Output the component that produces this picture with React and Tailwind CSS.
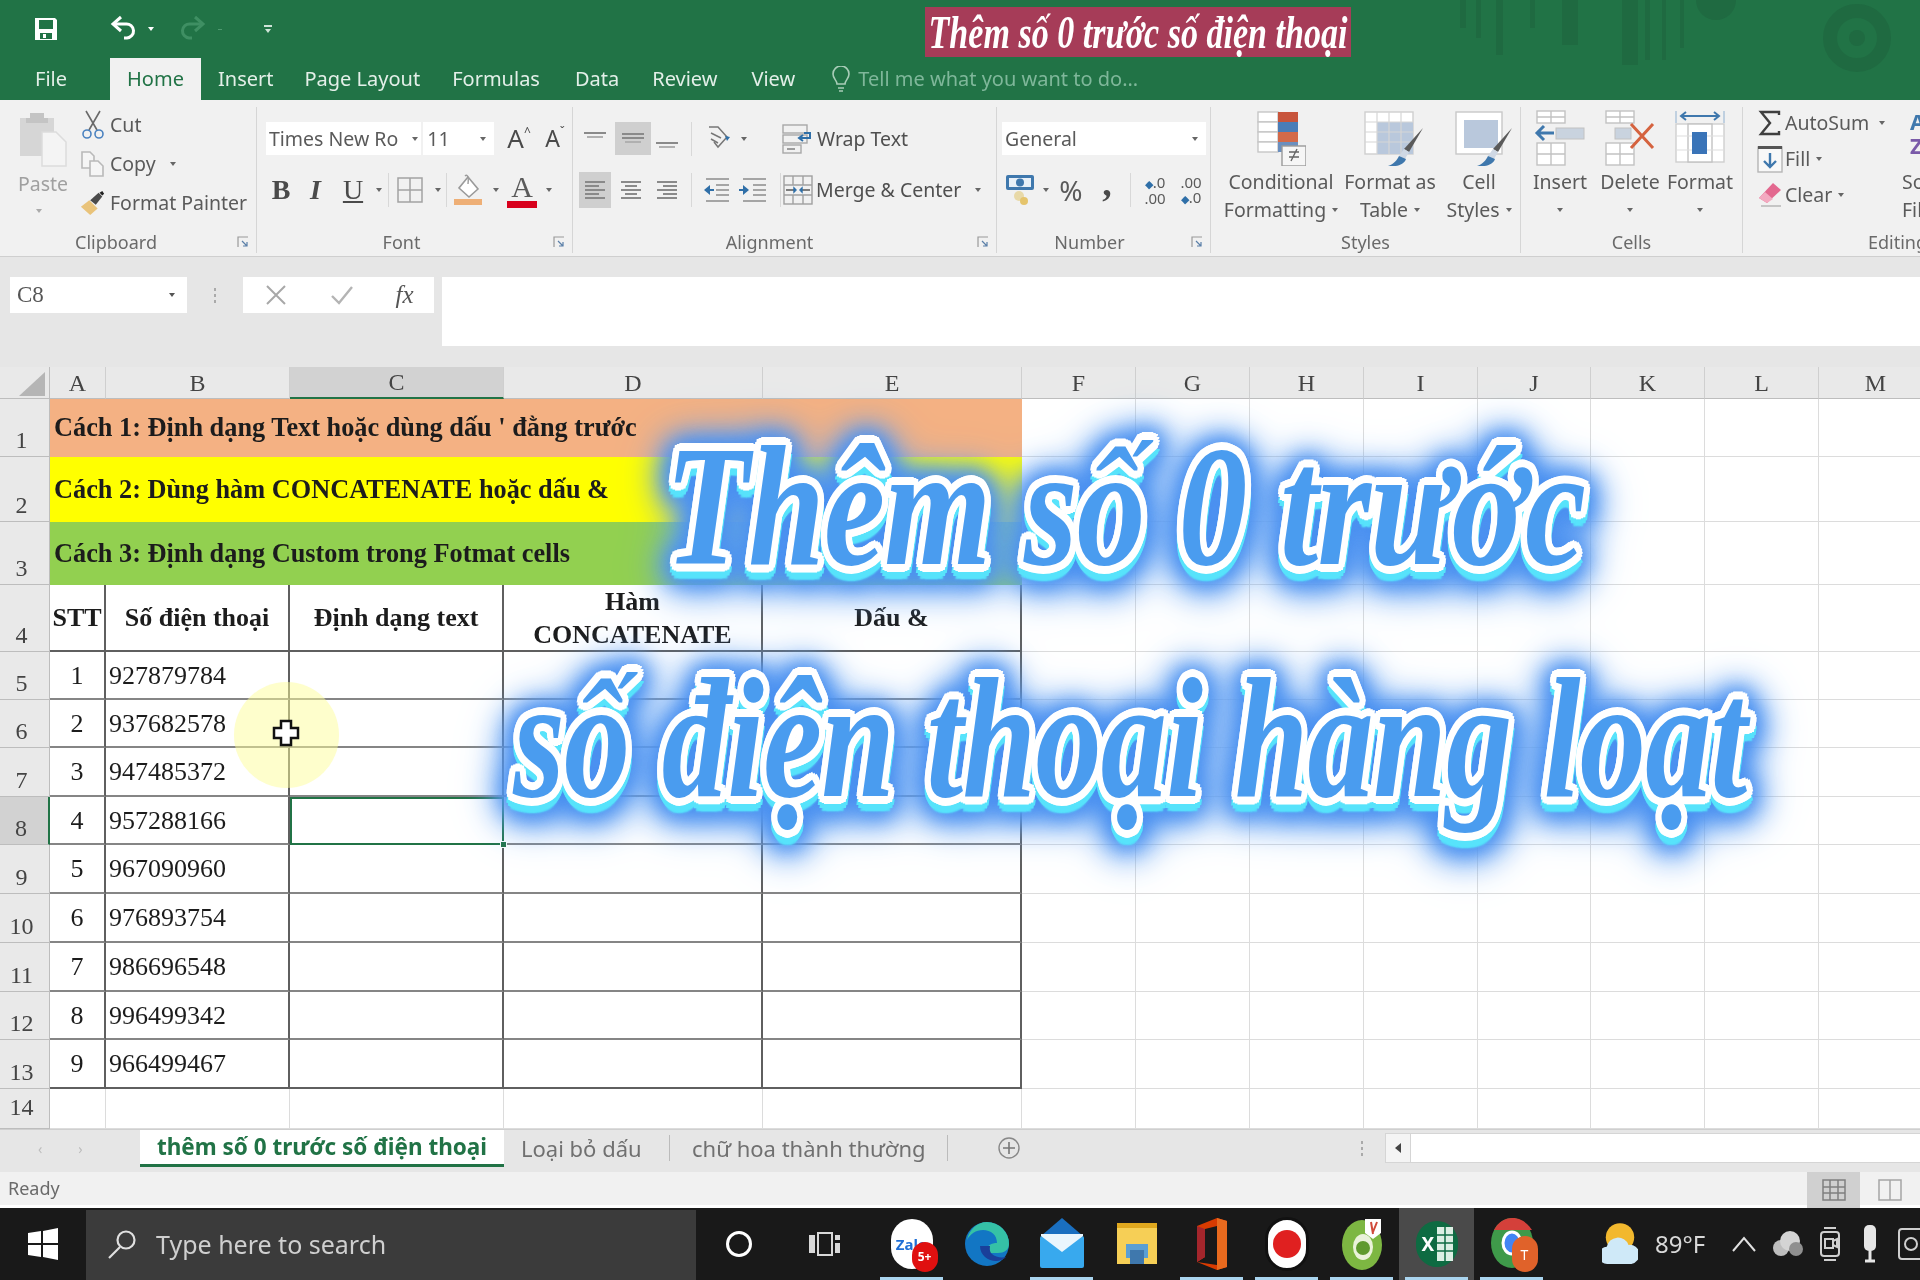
import React from "react";

const SERIF = "[font-family:'Liberation_Serif',serif]";

function Dd({ c = "border-t-[#666]" }) {
  return <span className={`inline-block w-0 h-0 border-x-[3.5px] border-t-[4px] border-x-transparent ${c}`} />;
}
function Sep() {
  return <span className="w-px h-[34px] bg-[#d8d8d8]" />;
}
function Box({ w, h, children, className = "" }) {
  return <span className={`flex items-center justify-center shrink-0 ${w} ${h} ${className}`}>{children}</span>;
}

function Launcher({ className }) {
  return (
    <svg width="12" height="12" viewBox="0 0 12 12" className={className}>
      <path d="M1 11V1h10" fill="none" stroke="#9a9a9a" strokeWidth="1.2" />
      <path d="M5 5l5 5M10 6v4H6" fill="none" stroke="#5a7fa8" strokeWidth="1.2" />
    </svg>
  );
}

function Group({ w, label, labelPad = "", launcher, border = true, children }) {
  return (
    <div className={`flex flex-col shrink-0 h-[146px] ${w} ${border ? "border-r border-[#d6d6d6]" : ""}`}>
      <div className="h-[124px] shrink-0">{children}</div>
      <div className={`relative h-[22px] flex items-center justify-center text-[18px] text-[#6a6a6a] ${labelPad}`}>
        {label}
        {launcher && <Launcher className="absolute right-[7px] top-[5px]" />}
      </div>
    </div>
  );
}

function Lines({ kind, gray = "#8a8a8a" }) {
  const rows = {
    left: [[2, 22], [2, 16], [2, 22], [2, 16], [2, 22]],
    center: [[2, 22], [6, 18], [2, 22], [6, 18], [2, 22]],
    right: [[2, 22], [8, 22], [2, 22], [8, 22], [2, 22]],
  }[kind];
  return (
    <svg width="24" height="22" viewBox="0 0 24 22">
      {rows.map(([a, b], i) => (
        <rect key={i} x={a} y={2 + i * 4} width={b - a} height="2" fill={gray} />
      ))}
    </svg>
  );
}
function VAlign({ pos }) {
  const y = pos === "top" ? 3 : pos === "mid" ? 8 : 13;
  return (
    <svg width="26" height="20" viewBox="0 0 26 20">
      <rect x="2" y={y} width="22" height="2" fill="#8a8a8a" />
      <rect x="5" y={y + 4} width="16" height="2" fill="#b0b0b0" />
      {pos === "mid" && <rect x="2" y={y - 4} width="22" height="2" fill="#8a8a8a" />}
    </svg>
  );
}
function Indent({ flip }) {
  return (
    <svg width="28" height="26" viewBox="0 0 28 26">
      <g fill="#a5a5a5">
        <rect x="4" y="1" width="23" height="2" />
        <rect x="14" y="7" width="13" height="2" />
        <rect x="14" y="12" width="13" height="2" />
        <rect x="14" y="17" width="13" height="2" />
        <rect x="4" y="23" width="23" height="2" />
      </g>
      <path d={flip ? "M10 13L4 8v10z" : "M2 13l6-5v10z"} fill="#2f6fa8" />
      <rect x={flip ? 0 : 7} y="12" width="5" height="2" fill="#2f6fa8" />
    </svg>
  );
}

const Save = () => (
  <svg width="26" height="26" viewBox="0 0 26 26">
    <path d="M2 2h20l2 2v20H2z" fill="#fff" />
    <rect x="6" y="4" width="14" height="9" fill="#217346" />
    <rect x="7" y="17" width="12" height="6" fill="#217346" />
    <rect x="10" y="18" width="3" height="4" fill="#fff" />
  </svg>
);
const Undo = ({ c = "#fff", flip }) => (
  <svg width="28" height="28" viewBox="0 0 28 28" className={flip ? "-scale-x-100" : ""}>
    <path d="M3 9h13a7 7 0 0 1 1 14h-3" fill="none" stroke={c} strokeWidth="3" />
    <path d="M11 2L3 9l8 7" fill="none" stroke={c} strokeWidth="3" />
  </svg>
);
const Scissors = () => (
  <svg width="24" height="30" viewBox="0 0 24 30" fill="none">
    <path d="M5 1l11 19M19 1L8 20" stroke="#6a6a6a" strokeWidth="1.6" />
    <circle cx="6" cy="24" r="4" stroke="#4a82c0" strokeWidth="1.6" />
    <circle cx="18" cy="24" r="4" stroke="#4a82c0" strokeWidth="1.6" />
  </svg>
);
const CopyI = () => (
  <svg width="26" height="28" viewBox="0 0 26 28" fill="none" stroke="#b9b9b9" strokeWidth="1.6">
    <path d="M2 2h8l4 4v12H2z" fill="#f5f5f5" />
    <path d="M10 11h8l5 5v10H10z" fill="#f5f5f5" />
  </svg>
);
const Painter = () => (
  <svg width="28" height="28" viewBox="0 0 28 28">
    <path d="M1 18l9-7 9 9-8 7z" fill="#e9c37a" />
    <path d="M11 11l9-8 4 4-7 9z" fill="#4a4a4a" />
    <path d="M21 3l3-2 2 3-2 2z" fill="#222" />
  </svg>
);
const PasteI = () => (
  <svg width="50" height="58" viewBox="0 0 50 58">
    <rect x="2" y="8" width="34" height="38" fill="#d6d6d6" />
    <path d="M12 8V3h14v5h4v5H8V8z" fill="#c4c4c4" />
    <path d="M24 22h14l10 10v24H24z" fill="#f4f4f4" stroke="#dcdcdc" strokeWidth="1.5" />
  </svg>
);
const Borders = () => (
  <svg width="28" height="28" viewBox="0 0 28 28" fill="none">
    <rect x="2" y="2" width="24" height="24" stroke="#a2a2a2" strokeWidth="1.5" />
    <path d="M14 2v24M2 14h24" stroke="#a2a2a2" strokeWidth="1.5" />
  </svg>
);
const Fill = () => (
  <svg width="30" height="32" viewBox="0 0 30 32">
    <path d="M15 3l10 12-9 8-10-9z" fill="#fff" stroke="#9a9a9a" strokeWidth="1.6" />
    <path d="M12 2c2-2 4 0 3 8" fill="none" stroke="#9a9a9a" strokeWidth="1.4" />
    <rect x="1" y="25" width="28" height="6" fill="#eeaf76" />
  </svg>
);
const FontColor = () => (
  <span className="flex flex-col items-center w-[30px]">
    <span className={`${SERIF} text-[30px] leading-[28px] text-[#5a5a5a]`}>A</span>
    <span className="w-[30px] h-[7px] bg-[#d8001c]" />
  </span>
);
const Orient = () => (
  <svg width="26" height="30" viewBox="0 0 26 30" fill="none">
    <path d="M3 3l9 0 9 10-9 10-4-5" stroke="#777" strokeWidth="1.5" />
    <path d="M5 9l10 5M5 15l7 4" stroke="#777" strokeWidth="1.5" />
    <path d="M19 12l5 1-3 4" fill="#2f6fa8" />
  </svg>
);
const Wrap = () => (
  <svg width="32" height="30" viewBox="0 0 32 30" fill="none">
    <rect x="1" y="1" width="24" height="8" stroke="#a8a8a8" strokeWidth="1.4" />
    <rect x="1" y="11" width="24" height="8" stroke="#a8a8a8" strokeWidth="1.4" />
    <rect x="1" y="21" width="18" height="8" stroke="#a8a8a8" strokeWidth="1.4" />
    <path d="M5 25h8" stroke="#777" strokeWidth="1.4" />
    <path d="M22 9h6v5h-10M21 11l-4 3 4 3" stroke="#2f6fa8" strokeWidth="2" />
  </svg>
);
const Merge = () => (
  <svg width="30" height="30" viewBox="0 0 30 30" fill="none" stroke="#a0a0a0" strokeWidth="1.4">
    <rect x="1" y="1" width="28" height="28" />
    <path d="M1 10h28M1 20h28M10 1v9M20 1v9M10 20v9M20 20v9" />
    <path d="M3 15h8M27 15h-8" stroke="#555" />
    <path d="M11 13v4l2-2zM19 13v4l-2-2z" fill="#2f6fa8" stroke="#2f6fa8" />
  </svg>
);
const Money = () => (
  <svg width="30" height="32" viewBox="0 0 30 32">
    <rect x="1" y="1" width="28" height="15" rx="2" fill="#3f78ad" />
    <rect x="4" y="4" width="22" height="9" fill="#e8f0f8" />
    <circle cx="15" cy="8.5" r="4" fill="#3f78ad" />
    <circle cx="14" cy="22" r="5" fill="#e8d9a8" />
    <circle cx="19" cy="27" r="4" fill="#e5c46c" />
  </svg>
);
const CF = () => (
  <svg width="50" height="56" viewBox="0 0 50 56">
    <g fill="#fff" stroke="#c6c6c6" strokeWidth="1.4">
      <rect x="2" y="2" width="20" height="10" />
      <rect x="2" y="12" width="20" height="10" />
      <rect x="2" y="22" width="20" height="10" />
      <rect x="2" y="32" width="20" height="10" />
    </g>
    <rect x="22" y="2" width="20" height="10" fill="#c8553c" />
    <rect x="22" y="12" width="20" height="10" fill="#4a7db8" />
    <rect x="22" y="22" width="20" height="10" fill="#d36a4a" />
    <rect x="22" y="32" width="20" height="10" fill="#6a8fbf" />
    <rect x="26" y="36" width="24" height="20" fill="#f6f6f6" stroke="#9a9a9a" strokeWidth="1.4" />
    <path d="M33 47h10M33 42h10M41 39l-6 12" stroke="#666" strokeWidth="1.4" />
  </svg>
);
const Brush = () => (
  <>
    <path d="M60 18L46 42l-5-3z" fill="#5a5a5a" />
    <path d="M41 39l5 3-4 7-6-3z" fill="#cfd8e4" />
    <path d="M36 46l7 3c-2 6-10 8-18 7 6-2 9-6 11-10z" fill="#3f78ad" />
  </>
);
const FAT = () => (
  <svg width="60" height="56" viewBox="0 0 60 56">
    <rect x="2" y="2" width="48" height="42" fill="#fff" stroke="#cfcfcf" strokeWidth="1.4" />
    <rect x="14" y="12" width="36" height="32" fill="#b9c8dc" />
    <path d="M2 12h48M2 22h48M2 32h48M14 2v42M26 2v42M38 2v42" stroke="#d6d6d6" strokeWidth="1.2" />
    <Brush />
  </svg>
);
const CS = () => (
  <svg width="60" height="56" viewBox="0 0 60 56">
    <rect x="4" y="2" width="46" height="42" fill="#fff" stroke="#c8c8c8" strokeWidth="1.4" />
    <rect x="12" y="10" width="34" height="28" fill="#b9c8dc" />
    <Brush />
  </svg>
);
const CellsGrid = ({ x, y, w = 28, h = 22 }) => (
  <g fill="#fff" stroke="#c2c2c2" strokeWidth="1.4">
    <rect x={x} y={y} width={w} height={h} />
    <path d={`M${x + w / 2} ${y}v${h}M${x} ${y + h / 2}h${w}`} />
  </g>
);
const InsertI = () => (
  <svg width="52" height="56" viewBox="0 0 52 56">
    <CellsGrid x={3} y={1} h={12} />
    <CellsGrid x={3} y={33} />
    <rect x="22" y="18" width="28" height="11" fill="#c9d3df" stroke="#c2c2c2" />
    <path d="M20 23H4M10 16l-7 7 7 7" fill="none" stroke="#3f78ad" strokeWidth="3" />
  </svg>
);
const DeleteI = () => (
  <svg width="54" height="56" viewBox="0 0 54 56">
    <CellsGrid x={3} y={1} h={12} />
    <CellsGrid x={3} y={33} />
    <rect x="12" y="18" width="16" height="11" fill="#c9d3df" stroke="#c2c2c2" />
    <path d="M28 14l22 24M50 14L28 38" stroke="#d5633f" strokeWidth="3" />
  </svg>
);
const FormatI = () => (
  <svg width="52" height="56" viewBox="0 0 52 56">
    <path d="M2 1v12M50 1v12" stroke="#8fb0d0" strokeWidth="1" />
    <path d="M7 6h38M12 2L7 6l5 4M40 2l5 4-5 4" fill="none" stroke="#3f78ad" strokeWidth="2" />
    <rect x="2" y="14" width="48" height="38" fill="#fff" stroke="#cfcfcf" strokeWidth="1.4" />
    <rect x="14" y="14" width="24" height="38" fill="#fff" stroke="#c2c2c2" strokeWidth="1.4" />
    <path d="M2 26h48M2 40h48" stroke="#ddd" strokeWidth="1.2" />
    <rect x="18" y="22" width="15" height="22" fill="#3a74b8" />
  </svg>
);
const Sigma = () => (
  <svg width="24" height="26" viewBox="0 0 24 26">
    <path d="M21 5V2H3l9 11-9 11h18v-3" fill="none" stroke="#3f3f3f" strokeWidth="2.4" />
  </svg>
);
const FillI = () => (
  <svg width="26" height="28" viewBox="0 0 26 28" fill="none">
    <rect x="1" y="2" width="24" height="25" fill="#f8f8f8" stroke="#b5b5b5" strokeWidth="1.4" />
    <rect x="1" y="1" width="24" height="3" fill="#555" />
    <path d="M13 8v14M7 16l6 6 6-6" stroke="#3f78ad" strokeWidth="2.4" />
  </svg>
);
const Eraser = () => (
  <svg width="26" height="28" viewBox="0 0 26 28">
    <path d="M2 17L16 2l8 7-14 13z" fill="#e3688f" />
    <path d="M2 17l6-6 8 7-6 4z" fill="#f3a9c0" />
    <path d="M4 25h20" stroke="#bbb" strokeWidth="1.6" />
  </svg>
);

const COLS = ["A", "B", "C", "D", "E", "F", "G", "H", "I", "J", "K", "L", "M"];
const HEADS = ["STT", "Số điện thoại", "Định dạng text", null, "Dấu &"];
const DATA = ["927879784", "937682578", "947485372", "957288166", "967090960", "976893754", "986696548", "996499342", "966499467"];
const LIGHT = "border-r border-b border-[#dcdcdc]";
const DARK = "border-r-2 border-b-2 border-[#5f5f5f]";
const BODY = "border-r-2 border-r-[#5f5f5f] border-b-2 border-b-[#858585]";

function RowHead({ n }) {
  return (
    <div className={`flex items-end justify-center ${n === 14 ? "pb-[7px]" : "pb-[2px]"} pr-[6px] border-b border-r border-[#bdbdbd] text-[24px] leading-[28px] text-[#444] ${SERIF} ${n === 8 ? "bg-[#d2d2d2] border-r-2 border-r-[#217346]" : "bg-[#e9e9e9]"}`}>
      {n}
    </div>
  );
}
const Blank = ({ count }) => Array.from({ length: count }, (_, i) => <div key={i} className={LIGHT} />);

function Sheet() {
  const merged = [
    ["Cách 1: Định dạng Text hoặc dùng dấu ' đằng trước", "bg-[#f4b183]"],
    ["Cách 2: Dùng hàm CONCATENATE hoặc dấu &", "bg-[#ffff00]"],
    ["Cách 3: Định dạng Custom trong Fotmat cells", "bg-[#92d050]"],
  ];
  return (
    <div className={`grid grid-cols-[50px_56px_184px_214px_259px_259px_114px_114px_114px_114px_113px_114px_114px_114px] grid-rows-[32px_58px_65px_63px_67px_48px_48px_49px_48px_49px_49px_49px_48px_49px_40px] w-[1932px] bg-white ${SERIF} text-[#1c1c1c]`}>
      <div className="flex items-end justify-end pr-[4px] pb-[2px] bg-[#e9e9e9] border-b border-r border-[#bdbdbd]">
        <svg width="26" height="24" viewBox="0 0 26 24"><path d="M26 0v24H0z" fill="#b5b5b5" /></svg>
      </div>
      {COLS.map((c) => (
        <div key={c} className={`flex items-center justify-center text-[24px] text-[#444] border-r border-[#cfcfcf] ${c === "C" ? "bg-[#d2d2d2] border-b-2 border-b-[#217346]" : "bg-[#e9e9e9] border-b border-b-[#bdbdbd]"}`}>
          {c}
        </div>
      ))}

      {merged.map(([t, bg], i) => (
        <React.Fragment key={t}>
          <RowHead n={i + 1} />
          <div className={`col-span-5 flex items-center pl-[4px] font-bold text-[26.3px] whitespace-nowrap ${bg}`}>{t}</div>
          <Blank count={8} />
        </React.Fragment>
      ))}

      <RowHead n={4} />
      {HEADS.map((h, i) => (
        <div key={i} className={`flex items-center justify-center text-center font-bold text-[26px] leading-[33px] whitespace-nowrap ${DARK}`}>
          {h === null ? <span>Hàm<br />CONCATENATE</span> : h}
        </div>
      ))}
      <Blank count={8} />

      {DATA.map((d, i) => {
        const line = i === 8 ? DARK : BODY;
        return (
          <React.Fragment key={d}>
            <RowHead n={i + 5} />
            <div className={`flex items-center justify-center text-[26px] ${line}`}>{i + 1}</div>
            <div className={`flex items-center pl-[3px] text-[26px] ${line}`}>{d}</div>
            {i === 3 ? (
              <div className="relative border-2 border-[#217346]">
                <span className="absolute right-[-5px] bottom-[-5px] w-[7px] h-[7px] bg-[#217346] border border-white" />
              </div>
            ) : (
              <div className={line} />
            )}
            <div className={line} />
            <div className={line} />
            <Blank count={8} />
          </React.Fragment>
        );
      })}

      <RowHead n={14} />
      <Blank count={13} />
    </div>
  );
}

function TitleOverlay() {
  const cls = `${SERIF} font-bold italic whitespace-nowrap text-[#4a9cef] text-[172px] leading-[172px] tracking-[-1px] [text-shadow:8px_0_0_#fff,7.4px_3px_0_#fff,5.7px_5.7px_0_#fff,3px_7.4px_0_#fff,0_8px_0_#fff,-3px_7.4px_0_#fff,-5.7px_5.7px_0_#fff,-7.4px_3px_0_#fff,-8px_0_0_#fff,-7.4px_-3px_0_#fff,-5.7px_-5.7px_0_#fff,-3px_-7.4px_0_#fff,0_-8px_0_#fff,3px_-7.4px_0_#fff,5.7px_-5.7px_0_#fff,7.4px_-3px_0_#fff,0_14px_0_#57e3fb,-6px_12px_0_#57e3fb,6px_12px_0_#57e3fb,-8px_9px_0_#57e3fb,8px_9px_0_#57e3fb,-3px_15px_2px_#57e3fb,3px_15px_2px_#57e3fb]`;
  return (
    <div className="absolute left-[400px] top-[420px] w-[1460px] flex flex-col items-center pointer-events-none [filter:drop-shadow(0_0_10px_#4a90f0)_drop-shadow(0_2px_14px_#4a90f0)_drop-shadow(0_2px_16px_#6aa8f5)]">
      <div className={`${cls} scale-x-[0.8] -translate-x-[5px]`}>Thêm số 0 trước</div>
      <div className={`${cls} scale-x-[0.77] mt-[60px]`}>số điện thoại hàng loạt</div>
    </div>
  );
}

function Ribbon() {
  return (
    <div className="flex h-[157px] pt-[7px] bg-[#f1f1f1] border-b border-[#cfcfcf] text-[19.5px] text-[#5a5a5a] whitespace-nowrap overflow-hidden">
      <Group w="w-[257px]" label="Clipboard" labelPad="pr-[24px]" launcher>
        <div className="flex">
          <div className="w-[80px] pl-[18px] pt-[3px] flex flex-col">
            <PasteI />
            <span className="mt-[4px] text-[#a0a0a0] leading-[24px]">Paste</span>
            <span className="pl-[18px] leading-[20px]"><Dd c="border-t-[#aaa]" /></span>
          </div>
          <div className="flex flex-col -mt-[2px]">
            <div className="flex items-center h-[39px] gap-[4px]"><Box w="w-[26px]" h="h-[32px]"><Scissors /></Box>Cut</div>
            <div className="flex items-center h-[39px] gap-[4px]"><Box w="w-[26px]" h="h-[32px]"><CopyI /></Box>Copy<span className="ml-[10px] flex"><Dd /></span></div>
            <div className="flex items-center h-[39px] gap-[4px]"><Box w="w-[26px]" h="h-[32px]"><Painter /></Box>Format Painter</div>
          </div>
        </div>
      </Group>

      <Group w="w-[316px]" label="Font" labelPad="pr-[26px]" launcher>
        <div className="flex items-center mt-[15px] ml-[9px] h-[33px]">
          <div className="flex items-center justify-between w-[156px] h-[33px] px-[3px] bg-white overflow-hidden">Times New Ro<Dd /></div>
          <div className="flex items-center justify-between w-[71px] h-[33px] px-[4px] ml-[2px] bg-white">11<span className="pr-[4px] flex"><Dd /></span></div>
          <Box w="w-[38px]" h="h-[33px]" className="ml-[6px] text-[26px] text-[#4a4a4a]">A<span className="text-[12px] -mt-[14px]">^</span></Box>
          <Box w="w-[34px]" h="h-[33px]" className="text-[23px] text-[#4a4a4a]">A<span className="text-[12px] -mt-[14px]">ˇ</span></Box>
        </div>
        <div className="flex items-center mt-[17px] ml-[10px] h-[36px]">
          <Box w="w-[28px]" h="h-[36px]" className={`${SERIF} font-bold text-[28px] text-[#4a4a4a]`}>B</Box>
          <Box w="w-[41px]" h="h-[36px]" className={`${SERIF} italic font-bold text-[28px] text-[#4a4a4a]`}>I</Box>
          <Box w="w-[34px]" h="h-[36px]" className={`${SERIF} underline text-[28px] text-[#4a4a4a]`}>U</Box>
          <Box w="w-[18px]" h="h-[36px]"><Dd /></Box>
          <Sep />
          <Box w="w-[41px]" h="h-[36px]"><Borders /></Box>
          <Box w="w-[16px]" h="h-[36px]"><Dd /></Box>
          <Sep />
          <Box w="w-[41px]" h="h-[36px]"><Fill /></Box>
          <Box w="w-[15px]" h="h-[36px]"><Dd /></Box>
          <Box w="w-[38px]" h="h-[36px]"><FontColor /></Box>
          <Box w="w-[15px]" h="h-[36px]"><Dd /></Box>
        </div>
      </Group>

      <Group w="w-[424px]" label="Alignment" labelPad="pr-[30px]" launcher>
        <div className="flex items-center mt-[15px] ml-[6px] h-[33px]">
          <Box w="w-[32px]" h="h-[33px]"><VAlign pos="top" /></Box>
          <Box w="w-[36px]" h="h-[33px]" className="ml-[4px] bg-[#cfcfcf]"><VAlign pos="mid" /></Box>
          <Box w="w-[32px]" h="h-[33px]"><VAlign pos="bot" /></Box>
          <span className="w-[8px]" /><Sep />
          <Box w="w-[38px]" h="h-[33px]" className="ml-[8px]"><Orient /></Box>
          <Box w="w-[12px]" h="h-[33px]"><Dd /></Box>
          <span className="w-[32px]" />
          <Wrap />
          <span className="ml-[3px] text-[#4f4f4f]">Wrap Text</span>
        </div>
        <div className="flex items-center mt-[17px] ml-[6px] h-[36px]">
          <Box w="w-[32px]" h="h-[36px]" className="bg-[#cfcfcf]"><Lines kind="left" /></Box>
          <Box w="w-[40px]" h="h-[36px]"><Lines kind="center" /></Box>
          <Box w="w-[32px]" h="h-[36px]"><Lines kind="right" /></Box>
          <span className="w-[8px]" /><Sep />
          <Box w="w-[40px]" h="h-[36px]" className="ml-[4px]"><Indent /></Box>
          <Box w="w-[34px]" h="h-[36px]"><Indent flip /></Box>
          <span className="w-[10px]" /><Sep />
          <span className="w-[2px]" />
          <Merge />
          <span className="ml-[3px] text-[#4f4f4f]">Merge &amp; Center</span>
          <span className="ml-[14px] flex"><Dd /></span>
        </div>
      </Group>

      <Group w="w-[214px]" label="Number" labelPad="pr-[28px]" launcher>
        <div className="flex items-center justify-between mt-[15px] ml-[5px] w-[204px] h-[33px] px-[3px] pr-[8px] bg-white">General<Dd /></div>
        <div className="flex items-center mt-[17px] ml-[3px] h-[36px]">
          <Box w="w-[40px]" h="h-[36px]"><Money /></Box>
          <Box w="w-[12px]" h="h-[36px]"><Dd /></Box>
          <Box w="w-[38px]" h="h-[36px]" className="text-[28px]">%</Box>
          <Box w="w-[34px]" h="h-[36px]" className={`${SERIF} font-bold text-[38px] leading-[14px] pb-[14px] text-[#4a4a4a]`}>,</Box>
          <span className="w-[6px]" /><Sep />
          <Box w="w-[38px]" h="h-[36px]" className="ml-[5px] text-[15px] leading-[15px] text-center"><span><span className="text-[#2f6fa8] text-[11px]">◆</span>.0<br />.00</span></Box>
          <Box w="w-[34px]" h="h-[36px]" className="text-[15px] leading-[15px] text-center"><span>.00<br /><span className="text-[#2f6fa8] text-[11px]">◆</span>.0</span></Box>
        </div>
      </Group>

      <Group w="w-[310px]" label="Styles">
        <div className="flex pl-[9px] pt-[3px] text-center leading-[28px]">
          <div className="w-[122px] flex flex-col items-center"><span className="h-[58px]"><CF /></span><span>Conditional</span><span className="flex items-center gap-[6px]">Formatting<Dd /></span></div>
          <div className="w-[96px] flex flex-col items-center"><span className="h-[58px] pl-[6px]"><FAT /></span><span>Format as</span><span className="flex items-center gap-[6px]">Table<Dd /></span></div>
          <div className="w-[82px] flex flex-col items-center"><span className="h-[58px] pl-[6px]"><CS /></span><span>Cell</span><span className="flex items-center gap-[6px]">Styles<Dd /></span></div>
        </div>
      </Group>

      <Group w="w-[222px]" label="Cells">
        <div className="flex pl-[4px] pt-[3px] leading-[28px]">
          <div className="w-[70px] flex flex-col items-center"><span className="h-[58px]"><InsertI /></span><span>Insert</span><span className="h-[28px] flex items-center"><Dd /></span></div>
          <div className="w-[70px] flex flex-col items-center"><span className="h-[58px]"><DeleteI /></span><span>Delete</span><span className="h-[28px] flex items-center"><Dd /></span></div>
          <div className="w-[70px] flex flex-col items-center"><span className="h-[58px]"><FormatI /></span><span>Format</span><span className="h-[28px] flex items-center"><Dd /></span></div>
        </div>
      </Group>

      <Group w="w-[177px]" label="Editing" labelPad="justify-start! pl-[125px]" border={false}>
        <div className="flex">
          <div className="w-[159px] pl-[12px] -mt-[2px] shrink-0">
            <div className="flex items-center h-[36px]"><Box w="w-[30px]" h="h-[36px]"><Sigma /></Box><span>AutoSum</span><span className="ml-[10px] flex"><Dd /></span></div>
            <div className="flex items-center h-[36px]"><Box w="w-[30px]" h="h-[36px]"><FillI /></Box><span>Fill</span><span className="ml-[6px] flex"><Dd /></span></div>
            <div className="flex items-center h-[36px]"><Box w="w-[30px]" h="h-[36px]"><Eraser /></Box><span>Clear</span><span className="ml-[6px] flex"><Dd /></span></div>
          </div>
          <div className="flex flex-col leading-[28px] shrink-0">
            <span className="h-[61px] pl-[8px] pt-[2px] flex flex-col text-[22px] leading-[24px] font-bold">
              <span className="text-[#3f78ad]">A</span><span className="text-[#7a5aa8]">Z</span>
            </span>
            <span>Sort &amp;</span>
            <span>Filter</span>
          </div>
        </div>
      </Group>
    </div>
  );
}

function FormulaBar() {
  return (
    <div className="flex items-start h-[110px] pt-[20px] bg-[#e6e6e6]">
      <div className={`flex items-center justify-between ml-[10px] w-[177px] h-[36px] pl-[7px] pr-[12px] bg-white text-[23px] text-[#555] ${SERIF}`}>C8<Dd c="border-t-[#555]" /></div>
      <div className="flex flex-col items-center justify-center gap-[3px] w-[56px] h-[36px]">
        <span className="w-[2px] h-[3px] bg-[#aaa]" /><span className="w-[2px] h-[3px] bg-[#aaa]" /><span className="w-[2px] h-[3px] bg-[#aaa]" />
      </div>
      <div className="flex items-center w-[191px] h-[36px] bg-white">
        <Box w="w-[66px]" h="h-[36px]">
          <svg width="22" height="22" viewBox="0 0 22 22"><path d="M2 2l18 18M20 2L2 20" stroke="#a8a8a8" strokeWidth="2" /></svg>
        </Box>
        <Box w="w-[66px]" h="h-[36px]">
          <svg width="24" height="20" viewBox="0 0 24 20" fill="none"><path d="M2 11l7 7L22 2" stroke="#b4b4b4" strokeWidth="2.4" /></svg>
        </Box>
        <Box w="w-[59px]" h="h-[36px]" className={`${SERIF} italic text-[25px] text-[#555]`}>fx</Box>
      </div>
      <div className="ml-[8px] flex-1 h-[69px] bg-white" />
    </div>
  );
}

function Tabs() {
  return (
    <>
      <div className="flex items-center h-[43px] pb-[6px] bg-[#e6e6e6] border-t border-[#cfcfcf] text-[22px] text-[#707070] whitespace-nowrap">
        <div className="flex items-center w-[140px] pl-[38px] gap-[36px] text-[#bdbdbd] text-[14px]"><span>‹</span><span>›</span></div>
        <div className="flex items-center justify-center w-[364px] h-[37px] bg-white border-b-[3px] border-[#217346] font-bold text-[22.5px] text-[#217346]">thêm số 0 trước số điện thoại</div>
        <div className="w-[166px] pl-[17px] border-r border-[#bbb] leading-[26px]">Loại bỏ dấu</div>
        <div className="w-[278px] pl-[22px] border-r border-[#bbb] leading-[26px]">chữ hoa thành thường</div>
        <svg width="24" height="24" viewBox="0 0 24 24" fill="none" className="ml-[49px]">
          <circle cx="12" cy="12" r="10" stroke="#888" strokeWidth="1.4" />
          <path d="M12 6v12M6 12h12" stroke="#777" strokeWidth="1.6" />
        </svg>
        <div className="flex flex-col gap-[3px] ml-[340px]">
          <span className="w-[2px] h-[3px] bg-[#aaa]" /><span className="w-[2px] h-[3px] bg-[#aaa]" /><span className="w-[2px] h-[3px] bg-[#aaa]" />
        </div>
        <div className="flex items-center justify-center w-[26px] h-[30px] ml-[22px] bg-[#f4f4f4] border border-[#d5d5d5]">
          <span className="w-0 h-0 border-y-[5px] border-r-[6px] border-y-transparent border-r-[#444]" />
        </div>
        <div className="flex-1 h-[30px] bg-white border-y border-[#d5d5d5]" />
      </div>
      <div className="flex items-center justify-between h-[33px] bg-[#f1f1f1] text-[18px] text-[#6a6a6a]">
        <span className="pl-[8px]">Ready</span>
        <div className="flex items-center h-[36px] self-start">
          <Box w="w-[53px]" h="h-[36px]" className="bg-[#d0d0d0]">
            <svg width="24" height="22" viewBox="0 0 24 22" fill="none" stroke="#7f7f7f" strokeWidth="1.5"><rect x="1" y="1" width="22" height="20" /><path d="M1 8h22M1 14h22M8 1v20M16 1v20" /></svg>
          </Box>
          <Box w="w-[60px]" h="h-[36px]">
            <svg width="24" height="22" viewBox="0 0 24 22" fill="none" stroke="#a5a5a5" strokeWidth="1.5"><rect x="1" y="1" width="22" height="20" /><path d="M12 1v20" /></svg>
          </Box>
        </div>
      </div>
    </>
  );
}

function TaskApp({ on, active, children }) {
  return (
    <div className={`relative flex items-center justify-center w-[75px] h-full ${active ? "bg-[#4a4a4a]" : ""}`}>
      {children}
      {on && <span className="absolute bottom-0 left-[6px] right-[6px] h-[3px] bg-[#a9d4ee]" />}
    </div>
  );
}

function Taskbar() {
  return (
    <div className="flex items-stretch w-max min-w-[1920px] h-[72px] mt-[3px] bg-[#191919] text-[#d8d8d8] whitespace-nowrap">
      <div className="flex items-center justify-center w-[86px]">
        <svg width="32" height="32" viewBox="0 0 32 32" fill="#fff"><path d="M1 5l13-2v12H1zM16 3l15-3v15H16zM1 17h13v12L1 27zM16 17h15v15l-15-3z" /></svg>
      </div>
      <div className="flex items-center w-[610px] mt-[2px] pl-[20px] bg-[#3b3b3b] text-[25px] text-[#cfcfcf]">
        <svg width="32" height="32" viewBox="0 0 32 32" fill="none" stroke="#e0e0e0" strokeWidth="2.2"><circle cx="20" cy="11" r="8.5" /><path d="M14 18L3 29" /></svg>
        <span className="ml-[18px]">Type here to search</span>
      </div>
      <div className="flex items-center justify-center w-[86px]">
        <span className="w-[26px] h-[26px] rounded-full border-[3.5px] border-white" />
      </div>
      <div className="flex items-center justify-center w-[86px]">
        <svg width="32" height="28" viewBox="0 0 32 28" fill="#d8d8d8"><rect x="0" y="5" width="6" height="18" /><rect x="9" y="3" width="14" height="22" fill="none" stroke="#d8d8d8" strokeWidth="2" /><rect x="26" y="5" width="5" height="5" /><rect x="26" y="13" width="5" height="10" /></svg>
      </div>
      <span className="w-[6px]" />
      <TaskApp on>
        <span className="relative flex items-center justify-center w-[42px] h-[50px] rounded-full bg-white text-[15px] text-[#1f6fd6] font-bold">
          Zalo
          <span className="absolute right-[-5px] bottom-[-3px] flex items-center justify-center w-[26px] h-[30px] rounded-full bg-[#e01010] text-[12px] text-white">5+</span>
        </span>
      </TaskApp>
      <TaskApp>
        <svg width="46" height="48" viewBox="0 0 46 48"><circle cx="23" cy="24" r="22" fill="#1276c4" /><path d="M23 2a22 22 0 0 1 22 22c0 6-5 9-11 9H22c0-8 6-10 11-10 0-8-6-13-14-13C12 10 6 14 3 20 5 10 13 2 23 2z" fill="#35c1a6" /><path d="M16 26c0 9 8 15 16 15 4 0 8-2 10-4-5 1-11 0-14-3-3-3-2-6-2-8z" fill="#1a3f9a" /></svg>
      </TaskApp>
      <TaskApp on>
        <svg width="46" height="52" viewBox="0 0 46 52"><path d="M23 0l21 18H2z" fill="#1a6fc0" /><rect x="1" y="18" width="44" height="32" rx="2" fill="#38a9ee" /><path d="M2 18l21 16 21-16v-2H2z" fill="#eaf6fd" /></svg>
      </TaskApp>
      <TaskApp>
        <svg width="42" height="48" viewBox="0 0 42 48"><rect x="1" y="3" width="40" height="8" fill="#e0a81e" /><rect x="1" y="8" width="40" height="36" fill="#f6cf56" /><rect x="10" y="24" width="22" height="14" fill="#5a9fd4" /><rect x="14" y="30" width="14" height="14" fill="#3f78ad" /></svg>
      </TaskApp>
      <TaskApp on>
        <svg width="34" height="52" viewBox="0 0 34 52"><path d="M2 8L22 0l10 3v46l-10 3L2 44l20 3V8L10 11v28l-8 5z" fill="#d83b01" /><path d="M22 0l10 3v46l-10 3z" fill="#e96a1e" /><path d="M2 8l8 3v28l-8 5z" fill="#a4262c" /></svg>
      </TaskApp>
      <TaskApp on>
        <span className="flex items-center justify-center w-[44px] h-[54px] rounded-full bg-white border-[3px] border-[#111]">
          <span className="w-[28px] h-[28px] rounded-full bg-[#e02020]" />
        </span>
      </TaskApp>
      <TaskApp on>
        <svg width="42" height="54" viewBox="0 0 42 54"><ellipse cx="21" cy="28" rx="20" ry="25" fill="#7db742" /><ellipse cx="22" cy="30" rx="10" ry="13" fill="#eaf2da" /><circle cx="22" cy="31" r="7" fill="#5f9a2e" /><path d="M24 2h16v14l-8 6-8-6z" fill="#fff" /><path d="M30 5l2 12M36 5l-4 10" stroke="#d04a3a" strokeWidth="2" /></svg>
      </TaskApp>
      <TaskApp on active>
        <span className="relative flex items-center w-[42px] h-[46px] rounded-full bg-[#0e6b42] text-[19px] font-bold text-white">
          <span className="pl-[6px]">X</span>
          <svg width="16" height="34" viewBox="0 0 16 34" className="ml-[3px]"><rect width="16" height="34" fill="#dcefe4" /><path d="M8 0v34M0 8h16M0 16h16M0 24h16" stroke="#0e6b42" strokeWidth="1.5" /></svg>
        </span>
      </TaskApp>
      <TaskApp on>
        <span className="relative block w-[42px] h-[52px]">
          <svg width="42" height="52" viewBox="0 0 42 52"><ellipse cx="21" cy="25" rx="21" ry="25" fill="#3f9a4a" /><path d="M3 12C7 4 14 0 21 0c8 0 15 4 20 12H21z" fill="#d4403a" /><ellipse cx="21" cy="25" rx="9" ry="11" fill="#4285f4" stroke="#fff" strokeWidth="3" /></svg>
          <span className="absolute right-[-5px] bottom-[-2px] flex items-center justify-center w-[26px] h-[36px] rounded-full bg-[#e0622a] text-[14px] text-white">T</span>
        </span>
      </TaskApp>
      <div className="flex items-center justify-center w-[36px] ml-[53px]">
        <svg width="38" height="50" viewBox="0 0 38 50"><circle cx="19" cy="18" r="15" fill="#f2b82e" /><path d="M6 46a9 9 0 0 1-1-18 12 12 0 0 1 23-2 10 10 0 0 1 3 20z" fill="#cfe9f8" /></svg>
      </div>
      <span className="self-center ml-[17px] text-[24px]">89°F</span>
      <svg width="26" height="16" viewBox="0 0 26 16" fill="none" className="self-center ml-[26px]"><path d="M2 15L13 2l11 13" stroke="#e0e0e0" strokeWidth="2" /></svg>
      <svg width="32" height="30" viewBox="0 0 32 30" className="self-center ml-[15px]"><circle cx="9" cy="19" r="8" fill="#bdbdbd" /><circle cx="18" cy="12" r="10" fill="#d4d4d4" /><circle cx="24" cy="20" r="7" fill="#8f8f8f" /></svg>
      <svg width="24" height="36" viewBox="0 0 24 36" fill="none" stroke="#cfcfcf" strokeWidth="2" className="self-center ml-[14px]"><rect x="3" y="6" width="18" height="24" rx="3" /><rect x="7" y="13" width="8" height="9" /><path d="M15 15l4-2v8l-4-2M6 2h12M6 34h12" /></svg>
      <svg width="20" height="40" viewBox="0 0 20 40" className="self-center ml-[18px]"><rect x="4" y="1" width="12" height="26" rx="5" fill="#e6e6e6" /><path d="M10 27v10M5 37h10" stroke="#e6e6e6" strokeWidth="3" /></svg>
      <svg width="28" height="34" viewBox="0 0 28 34" fill="none" stroke="#cfcfcf" strokeWidth="2" className="self-center ml-[17px]"><rect x="2" y="2" width="24" height="30" rx="3" /><circle cx="14" cy="17" r="6" /></svg>
    </div>
  );
}

export default function App() {
  return (
    <div className="relative w-[1920px] h-[1280px] overflow-hidden bg-white [font-family:'Noto_Sans',sans-serif] blur-[0.7px]">
      <div className="relative h-[100px] bg-[#217346] overflow-hidden">
        <svg width="480" height="80" viewBox="0 0 480 80" className="absolute left-[1440px] top-0" fill="#1f6a41">
          <rect x="20" y="0" width="6" height="28" /><rect x="36" y="0" width="5" height="38" /><rect x="56" y="0" width="7" height="55" /><rect x="90" y="0" width="5" height="28" />
          <rect x="122" y="0" width="16" height="45" /><rect x="182" y="0" width="16" height="65" /><rect x="205" y="0" width="5" height="60" /><rect x="222" y="0" width="4" height="60" /><rect x="240" y="0" width="4" height="48" />
          <circle cx="276" cy="0" r="20" />
          <circle cx="417" cy="38" r="27" fill="none" stroke="#1f6a41" strokeWidth="14" />
          <circle cx="417" cy="38" r="8" />
        </svg>
        <div className="flex items-center h-[58px] pl-[33px]">
          <Save />
          <span className="ml-[51px]"><Undo /></span>
          <span className="ml-[10px] flex"><Dd c="border-t-white" /></span>
          <span className="ml-[24px]"><Undo c="#3f8f63" flip /></span>
          <span className="ml-[12px] w-[4px] h-px bg-[#4f9a70]" />
          <span className="ml-[42px] flex flex-col items-center gap-[2px]"><span className="w-[8px] h-[2px] bg-[#cfe4d8]" /><Dd c="border-t-[#cfe4d8]" /></span>
        </div>
        <div className={`absolute left-[925px] top-[7px] w-[426px] h-[50px] flex items-center justify-center bg-[#a63c58] text-white text-[46px] ${SERIF} font-bold italic whitespace-nowrap`}>
          <span className="scale-x-[0.74]">Thêm số 0 trước số điện thoại</span>
        </div>
        <div className="flex items-center h-[42px] text-[20px] text-[#e3efe8] whitespace-nowrap">
          <span className="w-[110px] text-center pr-[8px]">File</span>
          <span className="w-[91px] h-[42px] flex items-center justify-center bg-[#f1f1f1] text-[#217346]">Home</span>
          <span className="ml-[17px]">Insert</span>
          <span className="ml-[31px]">Page Layout</span>
          <span className="ml-[32px]">Formulas</span>
          <span className="ml-[35px]">Data</span>
          <span className="ml-[33px]">Review</span>
          <span className="ml-[34px]">View</span>
          <svg width="20" height="26" viewBox="0 0 20 26" fill="none" stroke="#a9cdb8" strokeWidth="1.6" className="ml-[36px]"><path d="M6 18c0-4-4-5-4-10a8 8 0 0 1 16 0c0 5-4 6-4 10zM7 22h6M8 25h4" /></svg>
          <span className="ml-[7px] text-[#7fb79a]">Tell me what you want to do...</span>
        </div>
      </div>
      <Ribbon />
      <FormulaBar />
      <Sheet />
      <Tabs />
      <Taskbar />

      <span className="absolute left-[234px] top-[682px] w-[105px] h-[106px] rounded-full bg-[#fdfd9a]/50 pointer-events-none" />
      <svg width="30" height="30" viewBox="0 0 30 30" className="absolute left-[271px] top-[718px]">
        <path d="M10 3h10v7h7v10h-7v7H10v-7H3V10h7z" fill="#fff" stroke="#111" strokeWidth="2.5" />
      </svg>
      <TitleOverlay />
    </div>
  );
}
